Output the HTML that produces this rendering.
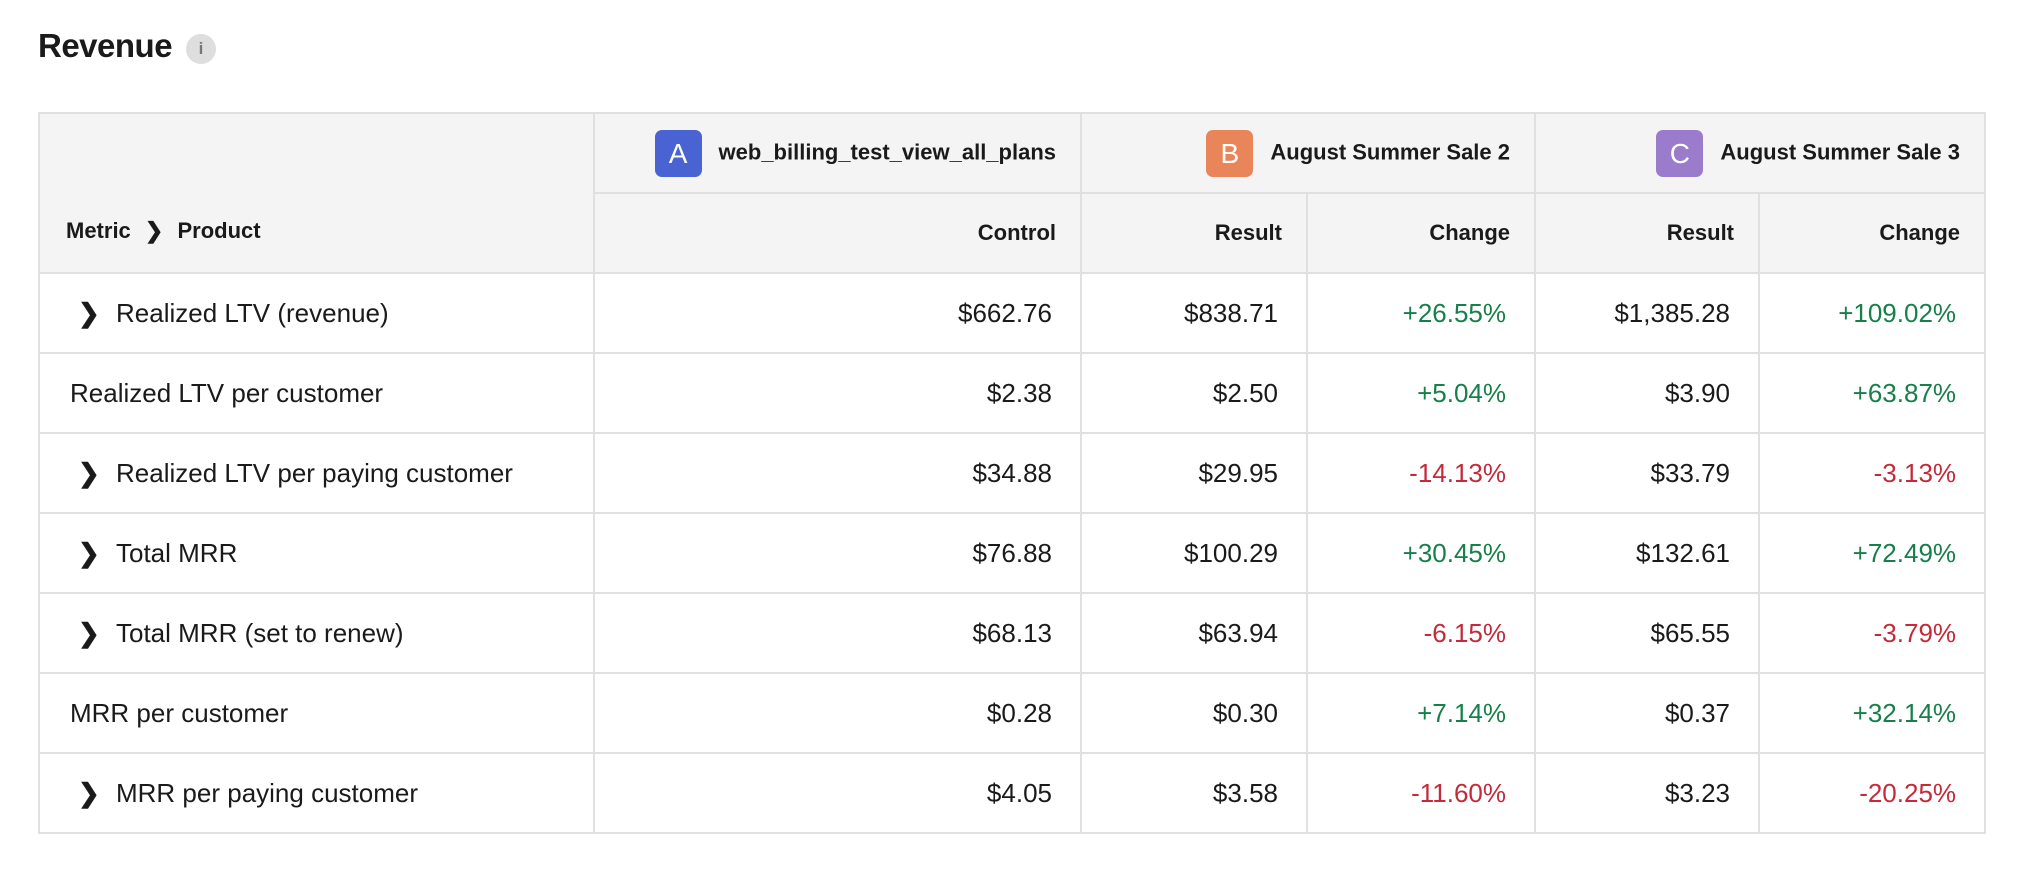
<!DOCTYPE html>
<html><head><meta charset="utf-8"><style>
body{margin:0;background:#fff;width:2024px;height:871px;overflow:hidden;font-family:"Liberation Sans",sans-serif;color:#1a1a1a}
.title{position:absolute;left:38px;top:27px;font-size:33px;font-weight:bold;letter-spacing:-0.5px}
.info{position:absolute;left:186px;top:34px;width:30px;height:30px;border-radius:50%;background:#dedede;color:#777;font-size:17px;text-align:center;line-height:30px;font-weight:bold}
table{position:absolute;left:38px;top:112px;border-collapse:collapse;table-layout:fixed;width:1946px}
td{border:2px solid #e0e0e0;height:78px;padding:0 28px 0 0;font-size:26px;text-align:right;white-space:nowrap}
thead td{background:#f4f4f4;font-weight:bold;font-size:22px}
td.l{text-align:left;padding:0 0 0 30px}
td.ch{padding-left:38px}
.chev{display:inline-block;width:38px;font-weight:bold}
.g{color:#17804a}.r{color:#c42a3a}
.badge{display:inline-block;width:47px;height:47px;border-radius:7px;color:#fff;font-size:28px;font-weight:normal;text-align:center;line-height:47px;vertical-align:middle;margin-right:17px}
</style></head><body>
<div class="title">Revenue</div><div class="info">i</div>
<table>
<colgroup><col style="width:555px"><col style="width:487px"><col style="width:226px"><col style="width:228px"><col style="width:224px"><col style="width:226px"></colgroup>
<thead>
<tr><td rowspan="2" class="l" style="padding-left:26px;vertical-align:bottom;padding-bottom:28px">Metric <span style="margin:0 8px">&#x276F;</span> Product</td>
<td style="padding-right:24px"><span class="badge" style="background:#4a63d3">A</span>web_billing_test_view_all_plans</td>
<td colspan="2" style="padding-right:24px"><span class="badge" style="background:#e8865a">B</span>August Summer Sale 2</td>
<td colspan="2" style="padding-right:24px"><span class="badge" style="background:#9b7bcc">C</span>August Summer Sale 3</td></tr>
<tr><td style="padding-right:24px">Control</td><td style="padding-right:24px">Result</td><td style="padding-right:24px">Change</td><td style="padding-right:24px">Result</td><td style="padding-right:24px">Change</td></tr>
</thead>
<tbody>
<tr><td class="l ch"><span class="chev">&#x276F;</span>Realized LTV (revenue)</td><td>$662.76</td><td>$838.71</td><td class="g">+26.55%</td><td>$1,385.28</td><td class="g">+109.02%</td></tr>
<tr><td class="l">Realized LTV per customer</td><td>$2.38</td><td>$2.50</td><td class="g">+5.04%</td><td>$3.90</td><td class="g">+63.87%</td></tr>
<tr><td class="l ch"><span class="chev">&#x276F;</span>Realized LTV per paying customer</td><td>$34.88</td><td>$29.95</td><td class="r">-14.13%</td><td>$33.79</td><td class="r">-3.13%</td></tr>
<tr><td class="l ch"><span class="chev">&#x276F;</span>Total MRR</td><td>$76.88</td><td>$100.29</td><td class="g">+30.45%</td><td>$132.61</td><td class="g">+72.49%</td></tr>
<tr><td class="l ch"><span class="chev">&#x276F;</span>Total MRR (set to renew)</td><td>$68.13</td><td>$63.94</td><td class="r">-6.15%</td><td>$65.55</td><td class="r">-3.79%</td></tr>
<tr><td class="l">MRR per customer</td><td>$0.28</td><td>$0.30</td><td class="g">+7.14%</td><td>$0.37</td><td class="g">+32.14%</td></tr>
<tr><td class="l ch"><span class="chev">&#x276F;</span>MRR per paying customer</td><td>$4.05</td><td>$3.58</td><td class="r">-11.60%</td><td>$3.23</td><td class="r">-20.25%</td></tr>
</tbody></table>
</body></html>
